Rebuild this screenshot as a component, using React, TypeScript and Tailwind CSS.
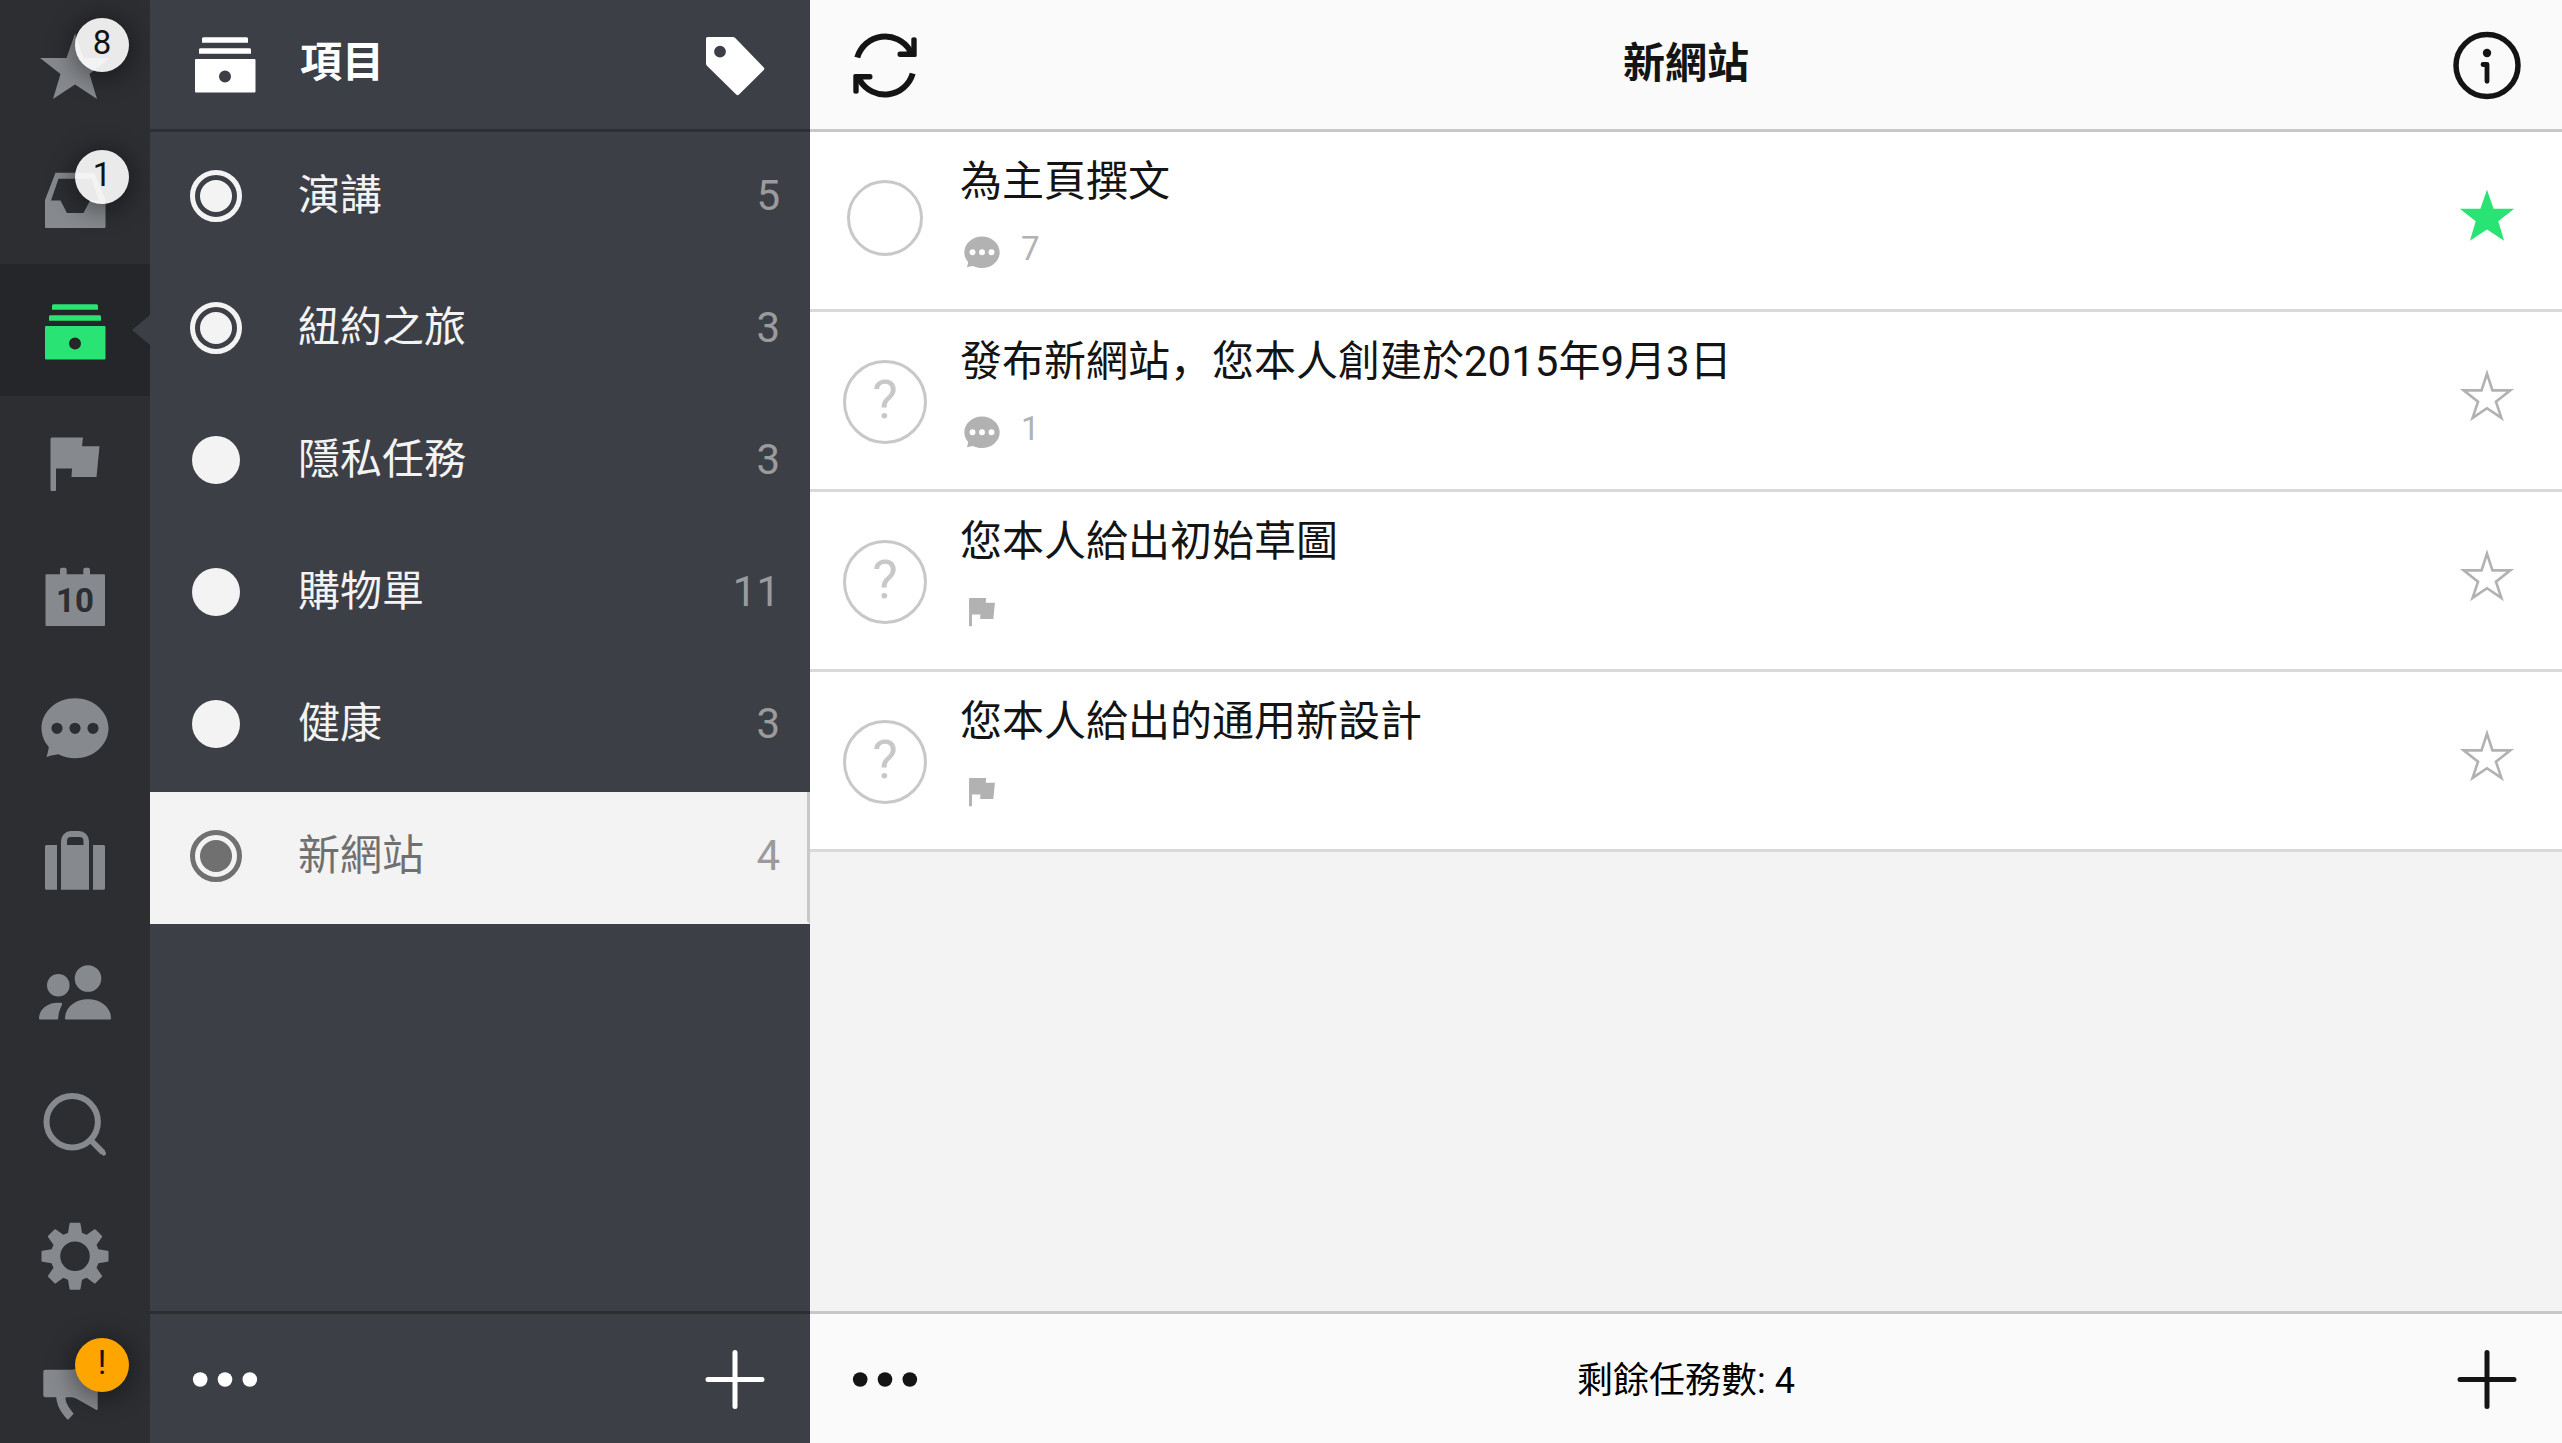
import { ReactNode, useState } from "react";
import clsx from "clsx";

const Icon = ({ children, className = "size-[72px]" }: { children: ReactNode; className?: string }) => (
  <svg viewBox="0 0 72 72" fill="currentColor" className={clsx("block shrink-0", className)} aria-hidden="true">
    {children}
  </svg>
);

const starPath = "M36 3.5 44.5 28H71L50.5 44 58 69 36 54.5 14 69 21.5 44 1 28H27.5Z";

const StarIcon = ({ className }: { className?: string }) => (
  <Icon className={className}>
    <path d={starPath} />
  </Icon>
);

const StarOutlineIcon = ({ className }: { className?: string }) => (
  <Icon className={className}>
    <path d="M36 8.500 43 30H66L47.500 44.500 54.500 65.500 36 53 17.500 65.500 24.500 44.500 6 30H29Z" fill="none" stroke="currentColor" strokeWidth="3.400" />
  </Icon>
);

const InboxIcon = () => (
  <Icon>
    <path
      fillRule="evenodd"
      d="M16.500 10.700H55.500L66.500 38V65A1 1 0 0 1 65.500 66H7A1 1 0 0 1 6 65V38ZM19.500 16.700 12 38.500H21.500L28 51H44.500L51 38.500H60L52.500 16.700Z"
    />
  </Icon>
);

const ProjectsIcon = () => (
  <Icon>
    <path d="M13 15.700V12A1.500 1.500 0 0 1 14.500 10.300H57.500A1.500 1.500 0 0 1 59 12V15.700ZM10 26.700V22.500A1.500 1.500 0 0 1 11.500 21.200H60.500A1.500 1.500 0 0 1 62 22.500V26.700Z" />
    <path
      fillRule="evenodd"
      d="M7 32H65.500A1 1 0 0 1 66.500 33V64.500A1 1 0 0 1 65.500 65.500H7A1 1 0 0 1 6 64.500V33A1 1 0 0 1 7 32ZM36 43.500A6 6 0 1 0 36 55.500A6 6 0 1 0 36 43.500Z"
    />
  </Icon>
);

const FlagIcon = ({ className }: { className?: string }) => (
  <Icon className={className}>
    <path d="M12.700 11.500H44L43 20.200H60.500L57.500 51H32.500L33 42.500H17V64A1 1 0 0 1 16 65H12.500A1 1 0 0 1 11.500 64V12.500Z" />
  </Icon>
);

const CalendarIcon = () => (
  <Icon>
    <path d="M7.500 16.300H21V11.500A2 2 0 0 1 23 9.700H25.700A2 2 0 0 1 27.700 11.500V16.300H44.300V11.500A2 2 0 0 1 46.300 9.700H49A2 2 0 0 1 51 11.500V16.300H65A1 1 0 0 1 66 17.300V67A1 1 0 0 1 65 68H7.500A1 1 0 0 1 6.500 67V17.300A1 1 0 0 1 7.500 16.300Z" />
    <text x="36" y="54" textAnchor="middle" className="fill-[#2d2e32] font-[Roboto] text-[33px] font-bold">
      10
    </text>
  </Icon>
);

const ChatIcon = ({ className }: { className?: string }) => (
  <Icon className={className}>
    <path
      fillRule="evenodd"
      d="M36 8.300C54.500 8.300 69.500 21.700 69.500 38.300S54.500 68.300 36 68.300C30 68.300 24.500 66.700 19.500 64.200C15.500 64.500 11.500 65.700 7.500 67C8.500 63.500 9.500 60 9.800 57C5 51.500 2.500 45 2.500 38.300C2.500 21.700 17.500 8.300 36 8.300ZM18 32.700A5.600 5.600 0 1 0 18 43.900A5.600 5.600 0 1 0 18 32.700ZM36 32.700A5.600 5.600 0 1 0 36 43.900A5.600 5.600 0 1 0 36 32.700ZM54 32.700A5.600 5.600 0 1 0 54 43.900A5.600 5.600 0 1 0 54 32.700Z"
    />
  </Icon>
);

const BriefcaseIcon = () => (
  <Icon>
    <path d="M7.500 23H18V67.700H7.500A1.500 1.500 0 0 1 6 66.200V24.500A1.500 1.500 0 0 1 7.500 23ZM54 23H64.500A1.500 1.500 0 0 1 66 24.500V66.200A1.500 1.500 0 0 1 64.500 67.700H54Z" />
    <path
      fillRule="evenodd"
      d="M22 67.700V19A10 10 0 0 1 32 9H40A10 10 0 0 1 50 19V67.700ZM28 23H44.500V19A4 4 0 0 0 40.500 15H32A4 4 0 0 0 28 19Z"
    />
  </Icon>
);

const PeopleIcon = () => (
  <Icon>
    <circle cx="19.300" cy="31.300" r="11.300" />
    <circle cx="49" cy="24.500" r="13.300" />
    <path d="M27 65.500A1 1 0 0 1 26 64.500C26 53 36.500 45.200 49 45.200S72 53 72 64.500A1 1 0 0 1 71 65.500Z" />
    <path d="M1 65.500A1 1 0 0 1 0 64.500C0 55 8.500 48.700 19 48.700H21.500C23.200 48.700 23.400 50 22.700 51.500C20.500 55.500 19.500 59.500 19.200 64.500A1 1 0 0 1 18.200 65.500Z" />
  </Icon>
);

const SearchIcon = () => (
  <Icon>
    <g fill="none" stroke="currentColor" strokeWidth="6">
      <circle cx="33.200" cy="35.700" r="25.700" />
      <path d="M52 54.500 64 66.500" />
      <path d="M63.500 66 64.800 67.300" strokeWidth="4.500" strokeLinecap="round" />
    </g>
  </Icon>
);

const GearIcon = () => (
  <Icon>
    <g transform="translate(36 38.300)">
      <circle r="19.500" fill="none" stroke="currentColor" strokeWidth="9.500" />
      {[0, 45, 90, 135, 180, 225, 270, 315].map((angle) => (
        <path
          key={angle}
          transform={`rotate(${angle})`}
          d="M-4.500-33.500H4.500Q5.300-33.500 5.500-32.500L7-23.500Q7.500-22.500 10-21.500L6-18H-6L-10-21.500Q-7.500-22.500-7-23.500L-5.500-32.500Q-5.300-33.500-4.500-33.500Z"
        />
      ))}
    </g>
  </Icon>
);

const MegaphoneIcon = () => (
  <Icon>
    <path d="M6.500 19.700H32.700C40 19.700 50 12 58.700 7V59C58.700 60 58 60.300 57 59.800L38 49Q35 47.300 32.700 47.300H27.500Q26.300 47.300 26.400 49C27.500 54.500 30.500 58.500 34.700 63.700L29.600 69.200Q29 70 28.200 69.200C21.500 62 18 55.500 17.200 47.300H6.500Q4.300 47.300 4.300 45.100V22Q4.300 19.700 6.500 19.700Z" />
  </Icon>
);

const TagIcon = () => (
  <Icon>
    <path
      fillRule="evenodd"
      d="M8.500 9H34Q35.200 9 36 9.800L64.800 39.500Q66 40.800 64.800 42L40 66.500Q38.500 67.800 37.200 66.500L8.200 38Q7 37 7 35.500V10.500Q7 9 8.500 9ZM21 17.700A5.900 5.900 0 1 0 21 29.500A5.900 5.900 0 1 0 21 17.700Z"
    />
  </Icon>
);

const RefreshIcon = () => (
  <Icon>
    {[0, 180].map((angle) => (
      <g key={angle} transform={`rotate(${angle} 36 36.500)`}>
        <path d="M8.300 28.500A29 29 0 0 1 61 21.500" fill="none" stroke="currentColor" strokeWidth="6" />
        <path d="M62.300 10.500Q62.300 8.300 65 8.300T67.700 10.500V26.500Q67.700 28 66 28H51Q48.500 28 48.500 25.300T51 22.500H57.500L62.300 20Z" />
      </g>
    ))}
  </Icon>
);

const InfoIcon = () => (
  <Icon>
    <circle cx="36" cy="36.500" r="31" fill="none" stroke="currentColor" strokeWidth="5.500" />
    <circle cx="36" cy="24" r="4.200" />
    <path d="M32 35.500H36V52.300" fill="none" stroke="currentColor" strokeWidth="4.800" strokeLinecap="round" strokeLinejoin="round" />
  </Icon>
);

const MoreIcon = () => (
  <Icon>
    <circle cx="11.200" cy="36.500" r="7.300" />
    <circle cx="36" cy="36.500" r="7.300" />
    <circle cx="60.800" cy="36.500" r="7.300" />
  </Icon>
);

const PlusIcon = () => (
  <Icon>
    <path d="M9 36.500H63M36 9.500V63.500" stroke="currentColor" strokeWidth="5" strokeLinecap="round" />
  </Icon>
);

const sections = [
  { id: "starred", icon: <StarIcon />, badge: "8" },
  { id: "inbox", icon: <InboxIcon />, badge: "1" },
  { id: "projects", icon: <ProjectsIcon /> },
  { id: "flagged", icon: <FlagIcon /> },
  { id: "calendar", icon: <CalendarIcon /> },
  { id: "comments", icon: <ChatIcon /> },
  { id: "work", icon: <BriefcaseIcon /> },
  { id: "people", icon: <PeopleIcon /> },
  { id: "search", icon: <SearchIcon /> },
  { id: "settings", icon: <GearIcon /> },
  { id: "news", icon: <MegaphoneIcon />, badge: "!" },
];

const projects = [
  { name: "演講", count: 5, shared: true },
  { name: "紐約之旅", count: 3, shared: true },
  { name: "隱私任務", count: 3, shared: false },
  { name: "購物單", count: 11, shared: false },
  { name: "健康", count: 3, shared: false },
  { name: "新網站", count: 4, shared: true },
];

const tasks = [
  { title: "為主頁撰文", comments: 7, starred: true, mine: true },
  { title: "發布新網站，您本人創建於2015年9月3日", comments: 1, starred: false, mine: false },
  { title: "您本人給出初始草圖", comments: 0, starred: false, mine: false },
  { title: "您本人給出的通用新設計", comments: 0, starred: false, mine: false },
];

const BarButton = ({ label, children }: { label: string; children: ReactNode }) => (
  <button aria-label={label} className="flex w-[150px] shrink-0 items-center justify-center self-stretch">
    {children}
  </button>
);

const ProjectDot = ({ shared }: { shared: boolean }) =>
  shared ? (
    <span className="flex size-[52px] items-center justify-center rounded-full border-5 border-current">
      <span className="size-8 rounded-full bg-current" />
    </span>
  ) : (
    <span className="size-12 rounded-full bg-current" />
  );

const Rail = () => {
  const [active, setActive] = useState("projects");
  return (
    <nav className="w-[150px] shrink-0 overflow-hidden bg-[#2d2e32] text-[#86898d]">
      {sections.map((s) => (
        <button
          key={s.id}
          aria-label={s.id}
          onClick={() => setActive(s.id)}
          className={clsx(
            "relative flex h-33 w-full items-center justify-center",
            s.id === active && "bg-[#25262a] text-[#29e374]"
          )}
        >
          {s.icon}
          {s.badge && (
            <span
              className={clsx(
                "absolute top-[18px] left-[75px] flex size-[54px] justify-center rounded-full text-[33px] leading-[50px] text-[#141414] shadow-[0_3px_24px_4px_rgba(0,0,0,0.4)]",
                s.badge === "!" ? "bg-[#ffa500]" : "bg-white/90"
              )}
            >
              {s.badge}
            </span>
          )}
          {s.id === active && (
            <svg viewBox="0 0 18 30" className="absolute right-0 h-[30px] w-[18px] fill-[#3d3f47]" aria-hidden="true">
              <path d="M18 0V30L0 15Z" />
            </svg>
          )}
        </button>
      ))}
    </nav>
  );
};

const ProjectPanel = ({ current, onSelect }: { current: string; onSelect: (name: string) => void }) => (
  <aside className="flex w-[660px] shrink-0 flex-col bg-[#3d3f47] text-white">
    <header className="flex h-33 shrink-0 items-center border-b-3 border-[#2d2e32] pb-px">
      <div className="flex w-[150px] justify-center pb-0.5">
        <ProjectsIcon />
      </div>
      <h2 className="flex-1 pb-0.5 text-[42px] leading-12 font-bold">項目</h2>
      <BarButton label="標籤">
        <TagIcon />
      </BarButton>
    </header>
    <ul className="flex-1">
      {projects.map((p) => (
        <li key={p.name}>
          <button
            onClick={() => onSelect(p.name)}
            className={clsx(
              "flex h-33 w-full items-center border-b-3 border-transparent pb-px text-left text-[42px] leading-12",
              p.name === current ? "border-r-3 border-r-[#c8c8c8] bg-[#f3f3f3] pr-[27px] text-[#707070]" : "pr-[30px] text-[#f3f3f3]"
            )}
          >
            <span className="flex w-33 justify-center">
              <ProjectDot shared={p.shared} />
            </span>
            <span className="flex-1 pl-4">{p.name}</span>
            <span className="text-[#9b9b9d]">{p.count}</span>
          </button>
        </li>
      ))}
    </ul>
    <footer className="flex h-33 shrink-0 items-center justify-between border-t-3 border-[#2d2e32]">
      <BarButton label="更多">
        <MoreIcon />
      </BarButton>
      <BarButton label="新增項目">
        <PlusIcon />
      </BarButton>
    </footer>
  </aside>
);

const TaskRow = ({ task }: { task: (typeof tasks)[number] }) => {
  const [starred, setStarred] = useState(task.starred);
  return (
    <li className="flex h-45 border-b-3 border-[#d9d9d9] bg-white">
      <div className="flex w-[150px] shrink-0 items-center justify-center pt-[3px]">
        {task.mine ? (
          <input
            type="checkbox"
            aria-label={task.title}
            className="mb-2 size-19 appearance-none rounded-full border-3 border-[#c8c8c8] checked:bg-[#29e374]"
          />
        ) : (
          <button
            aria-label={task.title}
            className="flex size-21 items-center justify-center rounded-full border-3 border-[#c8c8c8] pb-1 text-[54px] leading-none text-[#c8c8c8]"
          >
            ?
          </button>
        )}
      </div>
      <div className="min-w-0 flex-1 pt-6">
        <h3 className="text-[42px] leading-13">{task.title}</h3>
        <div className="flex h-[86px] items-center gap-5 pl-[3px] text-[33px] leading-10 text-[#b2b2b2]">
          {task.comments > 0 ? (
            <>
              <ChatIcon className="size-[38px]" />
              <span className="pb-1">{task.comments}</span>
            </>
          ) : (
            <FlagIcon className="size-[38px]" />
          )}
        </div>
      </div>
      <button
        aria-label="星號"
        onClick={() => setStarred(!starred)}
        className={clsx("flex w-[150px] shrink-0 items-center justify-center pb-3", starred ? "text-[#29e374]" : "text-[#b2b2b2]")}
      >
        {starred ? <StarIcon className="size-14" /> : <StarOutlineIcon className="size-14" />}
      </button>
    </li>
  );
};

const App = () => {
  const [current, setCurrent] = useState("新網站");
  return (
    <div
      lang="zh-Hans"
      className="flex h-screen overflow-hidden bg-[#f3f3f3] font-[Roboto,'Noto_Sans_CJK_SC',sans-serif] text-[#141414]"
    >
      <Rail />
      <ProjectPanel current={current} onSelect={setCurrent} />
      <main className="flex min-w-0 flex-1 flex-col">
        <header className="flex h-33 shrink-0 items-center border-b-3 border-[#c8c8c8] bg-[#fafafa]">
          <BarButton label="同步">
            <RefreshIcon />
          </BarButton>
          <h1 className="flex-1 pb-0.5 text-center text-[42px] leading-12 font-bold">{current}</h1>
          <BarButton label="資訊">
            <InfoIcon />
          </BarButton>
        </header>
        <ul className="min-h-0 flex-1">
          {tasks.map((t) => (
            <TaskRow key={t.title} task={t} />
          ))}
        </ul>
        <footer className="flex h-33 shrink-0 items-center border-t-3 border-[#c8c8c8] bg-[#fafafa]">
          <BarButton label="更多">
            <MoreIcon />
          </BarButton>
          <p className="flex-1 pt-1 text-center text-[36px] leading-12 text-black">剩餘任務數: {tasks.length}</p>
          <BarButton label="新增任務">
            <PlusIcon />
          </BarButton>
        </footer>
      </main>
    </div>
  );
};

export default App;
